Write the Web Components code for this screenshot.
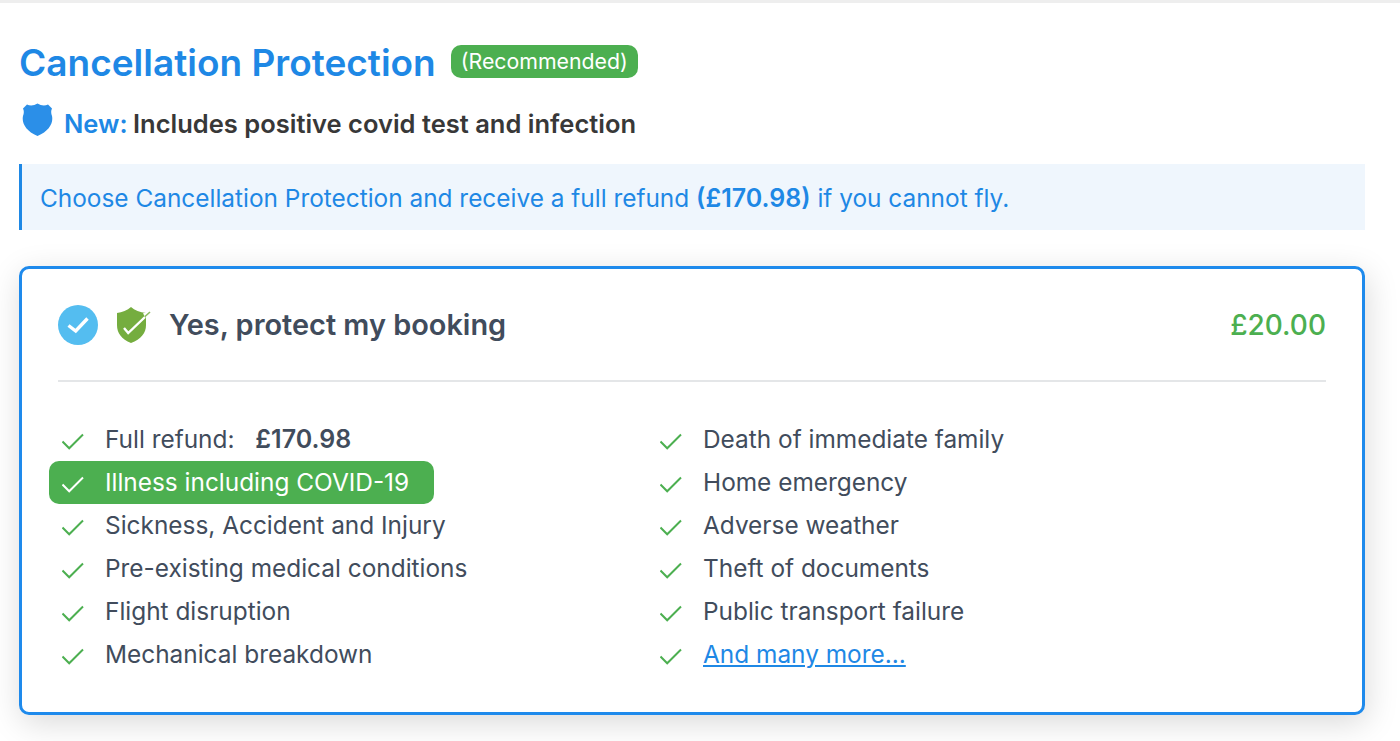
<!DOCTYPE html>
<html lang="en">
<head>
<meta charset="utf-8">
<title>Cancellation Protection</title>
<style>
    html, body {
        margin: 0;
        height: 741px;
        overflow: hidden;
        background: #fff;
        font-family: Inter, "Liberation Sans", sans-serif;
    }
</style>
</head>
<body>
<protection-page>
    <section-heading badge="(Recommended)">Cancellation Protection</section-heading>
    <new-note>Includes positive covid test and infection</new-note>
    <info-banner>Choose Cancellation Protection and receive a full refund <b style="font-size:25px;font-weight:600">(£170.98)</b> if you cannot fly.</info-banner>
    <protect-card price="£20.00" label="Yes, protect my booking">
        <check-item>Full refund: <b style="margin-left:14px;font-size:25px;font-weight:600">£170.98</b></check-item>
        <check-item>Death of immediate family</check-item>
        <check-item highlight>Illness including COVID-19</check-item>
        <check-item>Home emergency</check-item>
        <check-item>Sickness, Accident and Injury</check-item>
        <check-item>Adverse weather</check-item>
        <check-item>Pre-existing medical conditions</check-item>
        <check-item>Theft of documents</check-item>
        <check-item>Flight disruption</check-item>
        <check-item>Public transport failure</check-item>
        <check-item>Mechanical breakdown</check-item>
        <check-item><a href="#" style="color:#1e88e5">And many more...</a></check-item>
    </protect-card>
</protection-page>

<script>
class ProtectionPage extends HTMLElement {
    constructor() {
        super();
        this.attachShadow({ mode: "open" });
        this.shadowRoot.innerHTML = `
            <style>
                :host {
                    display: block;
                    box-sizing: border-box;
                    height: 741px;
                    padding: 0 35px 0 19px;
                    border-top: 3px solid #eeeeee;
                }
            </style>
            <slot></slot>
        `;
    }
}

class SectionHeading extends HTMLElement {
    constructor() {
        super();
        this.attachShadow({ mode: "open" });
        this.shadowRoot.innerHTML = `
            <style>
                :host {
                    display: flex;
                    align-items: center;
                    gap: 15px;
                    padding-top: 37px;
                    height: 44px;
                }
                h2 {
                    margin: 0;
                    font-size: 37px;
                    font-weight: 600;
                    color: #1e88e5;
                    white-space: nowrap;
                }
                span {
                    box-sizing: border-box;
                    height: 33px;
                    padding: 0 10px 2px;
                    display: flex;
                    align-items: center;
                    border-radius: 10px;
                    margin-top: -1px;
                    background: #4caf50;
                    color: #fff;
                    font-size: 21.3px;
                }
            </style>
            <h2><slot></slot></h2>
            <span id="badge"></span>
        `;
    }

    connectedCallback() {
        this.shadowRoot.querySelector("#badge").textContent = this.getAttribute("badge") ?? "";
    }
}

class NewNote extends HTMLElement {
    constructor() {
        super();
        this.attachShadow({ mode: "open" });
        this.shadowRoot.innerHTML = `
            <style>
                :host {
                    display: flex;
                    align-items: flex-start;
                    gap: 11px;
                    height: 44px;
                    margin-top: 19px;
                    padding-left: 3px;
                    font-size: 25.5px;
                    font-weight: 600;
                    color: #383838;
                }
                svg {
                    width: 31px;
                    height: 34px;
                    flex: none;
                }
                .text {
                    padding-top: 5px;
                    white-space: nowrap;
                }
                em {
                    font-style: normal;
                    color: #1e88e5;
                }
            </style>
            <svg viewBox="0 0 31 34">
                <path fill="#2b8fe8" d="M5 1.5 C8 3 12 2.8 15.5 0.5 C19 2.8 23 3 26 1.5 L30 5.5 C28.8 8 29 10 30 13 C31.5 20 27 28 15.5 33 C4 28 -0.5 20 1 13 C2 10 2.2 8 1 5.5 Z"/>
            </svg>
            <div class="text"><em style="margin-right:-1px">New:</em> <slot></slot></div>
        `;
    }
}

class InfoBanner extends HTMLElement {
    constructor() {
        super();
        this.attachShadow({ mode: "open" });
        this.shadowRoot.innerHTML = `
            <style>
                :host {
                    display: flex;
                    align-items: center;
                    box-sizing: border-box;
                    height: 66px;
                    margin-top: 17px;
                    padding-left: 18px;
                    padding-top: 1px;
                    border-left: 3px solid #1e88e5;
                    background: #eff6fd;
                    color: #1e88e5;
                    font-size: 24.4px;
                }
                div {
                    white-space: pre-wrap;
                }
            </style>
            <div><slot></slot></div>
        `;
    }
}

class ProtectCard extends HTMLElement {
    constructor() {
        super();
        this.attachShadow({ mode: "open" });
        this.shadowRoot.innerHTML = `
            <style>
                :host {
                    display: block;
                    box-sizing: border-box;
                    height: 449px;
                    margin-top: 36px;
                    padding: 0 36px;
                    border: 3px solid #1e8aec;
                    border-radius: 10px;
                    background: #fff;
                    box-shadow: 2px 8px 32px rgba(0, 0, 0, 0.15);
                }
                header {
                    display: flex;
                    align-items: center;
                    box-sizing: border-box;
                    height: 113px;
                    padding-top: 1px;
                    border-bottom: 2px solid #e4e6e8;
                }
                .tick {
                    width: 40px;
                    height: 40px;
                    flex: none;
                }
                .shield {
                    width: 36px;
                    height: 38px;
                    flex: none;
                    margin-left: 18px;
                }
                .label {
                    margin-left: 17px;
                    margin-top: -2px;
                    font-size: 28.9px;
                    font-weight: 600;
                    color: #414c5c;
                }
                .price {
                    margin-left: auto;
                    font-size: 28px;
                    font-weight: 500;
                    color: #4caf50;
                }
                .list {
                    display: grid;
                    grid-template-columns: 598px 1fr;
                    grid-auto-rows: 43px;
                    padding-top: 36px;
                }
            </style>
            <header>
                <svg class="tick" viewBox="0 0 40 40">
                    <circle cx="20" cy="20" r="20" fill="#54bdf0"/>
                    <path d="M10.5 20.5 L17.7 26 L29.5 13.5" fill="none" stroke="#fff" stroke-width="3.4"/>
                </svg>
                <svg class="shield" viewBox="0 0 36 38">
                    <path fill="#75ad3f" d="M15 1 C18.5 4 24 6.5 30 7 L30 19 C30 27 25 33 15 37 C5.5 33 1 27 1 19 L1 7 C6 6.5 11.5 4 15 1 Z"/>
                    <path d="M8 22 L12.2 27 L29 11" fill="none" stroke="#fff" stroke-width="2.4"/>
                    <path d="M27 7.2 L34 6 L29 11 Z" fill="#fff"/>
                    <path d="M29 10.5 L34 6" fill="none" stroke="#8dbb63" stroke-width="1.6"/>
                </svg>
                <span class="label" id="label"></span>
                <span class="price" id="price"></span>
            </header>
            <div class="list"><slot></slot></div>
        `;
    }

    connectedCallback() {
        this.shadowRoot.querySelector("#label").textContent = this.getAttribute("label") ?? "";
        this.shadowRoot.querySelector("#price").textContent = this.getAttribute("price") ?? "";
    }
}

class CheckItem extends HTMLElement {
    constructor() {
        super();
        this.attachShadow({ mode: "open" });
        this.shadowRoot.innerHTML = `
            <style>
                :host {
                    display: flex;
                    align-items: center;
                    gap: 20px;
                    height: 43px;
                    padding-left: 4px;
                    font-size: 24.4px;
                    color: #414c5c;
                    white-space: pre;
                }
                :host([highlight]) {
                    justify-self: start;
                    box-sizing: border-box;
                    margin-left: -9px;
                    padding-left: 13px;
                    width: 385px;
                    border-radius: 10px;
                    background: #4caf50;
                    color: #fff;
                }
                svg {
                    width: 23px;
                    height: 20px;
                    flex: none;
                    margin-top: 3px;
                    color: #4caf50;
                }
                :host([highlight]) svg {
                    color: #fff;
                }
                span {
                    margin-top: -2px;
                }
            </style>
            <svg viewBox="0 0 23 20">
                <path d="M0.5 10.5 L7.2 17.3 L21 3.5" fill="none" stroke="currentColor" stroke-width="2"/>
            </svg>
            <span><slot></slot></span>
        `;
    }
}

customElements.define("protection-page", ProtectionPage);
customElements.define("section-heading", SectionHeading);
customElements.define("new-note", NewNote);
customElements.define("info-banner", InfoBanner);
customElements.define("protect-card", ProtectCard);
customElements.define("check-item", CheckItem);
</script>
</body>
</html>
